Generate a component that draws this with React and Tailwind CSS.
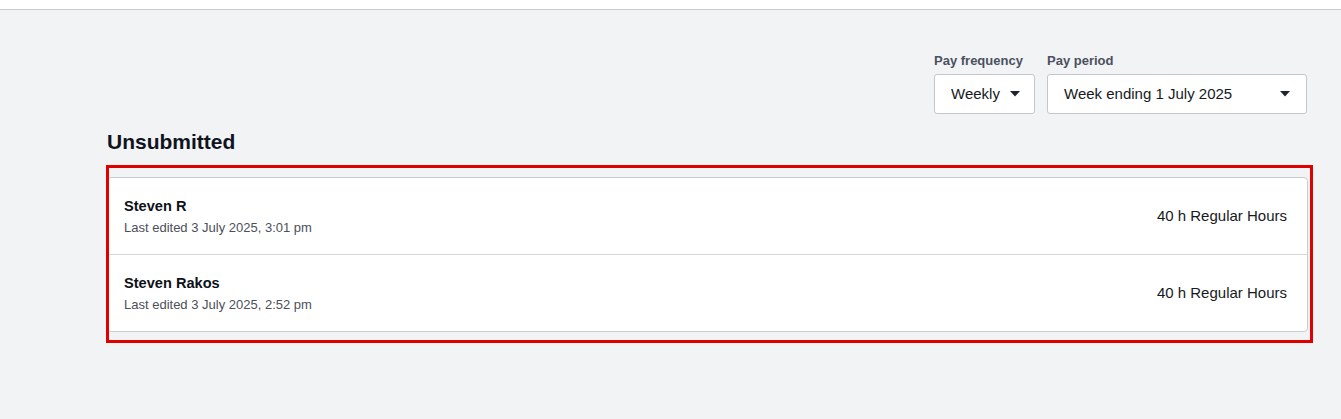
import React from "react";

function Caret() {
  return (
    <svg width="10" height="6" viewBox="0 0 10 6" className="shrink-0">
      <path d="M0 0 L10 0 L5 5.5 Z" fill="#1f2430" />
    </svg>
  );
}

function Select({ label, value, className }) {
  return (
    <div className="flex flex-col">
      <div className="text-[13px] leading-4 font-bold text-[#4a5160] mb-[5px]">{label}</div>
      <div
        className={
          "h-10 bg-white border border-[#c3c6cc] rounded-[3px] flex items-center justify-between px-4 text-[15px] text-[#161a22] " +
          className
        }
      >
        <span>{value}</span>
        <Caret />
      </div>
    </div>
  );
}

function Row({ name, edited, last }) {
  return (
    <div
      className={
        "flex items-center justify-between pl-4 pr-5 " +
        (last ? "h-[76px]" : "h-[77px] border-b border-[#d5d7db]")
      }
    >
      <div className="flex flex-col">
        <div className="text-[14.6px] leading-5 font-bold text-[#0d1118]">{name}</div>
        <div className="text-[13px] leading-[18px] mt-[3px] text-[#4b505a]">{edited}</div>
      </div>
      <div className="text-[15px] text-[#161a22]">40 h Regular Hours</div>
    </div>
  );
}

export default function App() {
  return (
    <div
      className="min-h-[419px] bg-[#f2f3f5]"
      style={{ fontFamily: '"Liberation Sans", Arial, sans-serif' }}
    >
      <div className="h-[10px] bg-white border-b border-[#c8c9cc]" />
      <div className="pl-[107px] w-[1307px]">
        <div className="flex justify-end gap-3 pt-[43px]">
          <Select label="Pay frequency" value="Weekly" className="w-[101px] gap-[10px]" />
          <Select label="Pay period" value="Week ending 1 July 2025" className="w-[260px]" />
        </div>
        <h2 className="text-[21px] leading-7 font-bold text-[#0f1420] mt-[14px]">Unsubmitted</h2>
        <div className="relative mt-[21px]">
          <div className="bg-white border border-[#c9ccd1] rounded-[4px] w-[1201px]">
            <Row name="Steven R" edited="Last edited 3 July 2025, 3:01 pm" />
            <Row name="Steven Rakos" edited="Last edited 3 July 2025, 2:52 pm" last />
          </div>
          <div className="absolute left-[-1px] top-[-12px] w-[1207px] h-[178px] border-[3px] border-[#e00000] pointer-events-none" />
        </div>
      </div>
    </div>
  );
}
